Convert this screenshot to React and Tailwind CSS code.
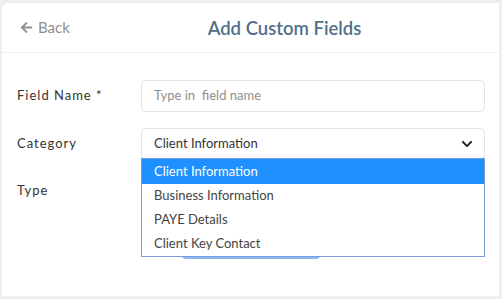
import React from "react";
import { FaArrowLeft, FaChevronDown } from "react-icons/fa";

export default function App() {
  const items = ["Client Information", "Business Information", "PAYE Details", "Client Key Contact"];
  return (
    <div className="w-[502px] h-[299px] bg-[#eceef2] pt-[3px] pl-[2px] pr-[3px] pb-[3px] overflow-hidden" style={{ fontFamily: "Lato, 'Open Sans', sans-serif" }}>
      <div className="bg-white h-full rounded-tl-[6px] flex flex-col">
        <div className="h-[50px] border-b border-[#eef0f2] flex items-center shrink-0">
          <div className="w-[70px] pl-[18px] flex items-center gap-[5px] text-[#8f8f8f] text-[15px]">
            <FaArrowLeft className="w-[13px] h-[13px]" />
            <span>Back</span>
          </div>
          <div className="flex-1 text-center text-[18.5px] font-semibold text-[#4f7089] pr-[2px] pt-[2px]">Add Custom Fields</div>
        </div>
        <div className="pl-[15px] pr-[14px] pt-[27px] flex flex-col gap-[16px]">
          <div className="flex items-center">
            <div className="w-[124px] text-[13px] tracking-[1px] text-[#333]">Field Name *</div>
            <div className="flex-1 h-[32px] border border-[#e4e4e4] rounded-[4px] flex items-center px-[12px] text-[13px] text-[#8f8f8f]">Type in&nbsp; field name</div>
          </div>
          <div className="flex items-center">
            <div className="w-[124px] text-[13px] tracking-[1px] text-[#333]">Category</div>
            <div className="flex-1 relative">
              <div className="h-[31px] border border-[#e4e4e4] rounded-[4px] flex items-center justify-between pl-[12px] pr-[11px] text-[13px] text-[#333]">
                <span>Client Information</span>
                <FaChevronDown className="w-[12px] h-[12px] text-[#222]" />
              </div>
              <div className="absolute left-0 right-0 top-[30px] bg-white border border-[#7b9ed9] z-10 text-[13px] text-[#444]">
                {items.map((t, i) => (
                  <div key={t} className={(i === 0 ? "bg-[#1e90ff] text-white h-[25px] " : "h-[24px] ") + "flex items-center pl-[12px]"}>{t}</div>
                ))}
              </div>
            </div>
          </div>
          <div className="flex items-center">
            <div className="w-[124px] text-[13px] tracking-[1px] text-[#333]">Type</div>
            <div className="flex-1 h-[32px] border border-[#e4e4e4] rounded-[4px]"></div>
          </div>
          <div className="flex pl-[165px]">
            <div className="w-[138px] h-[36px] rounded-[4px] bg-[#8db8f2]"></div>
          </div>
        </div>
      </div>
    </div>
  );
}
